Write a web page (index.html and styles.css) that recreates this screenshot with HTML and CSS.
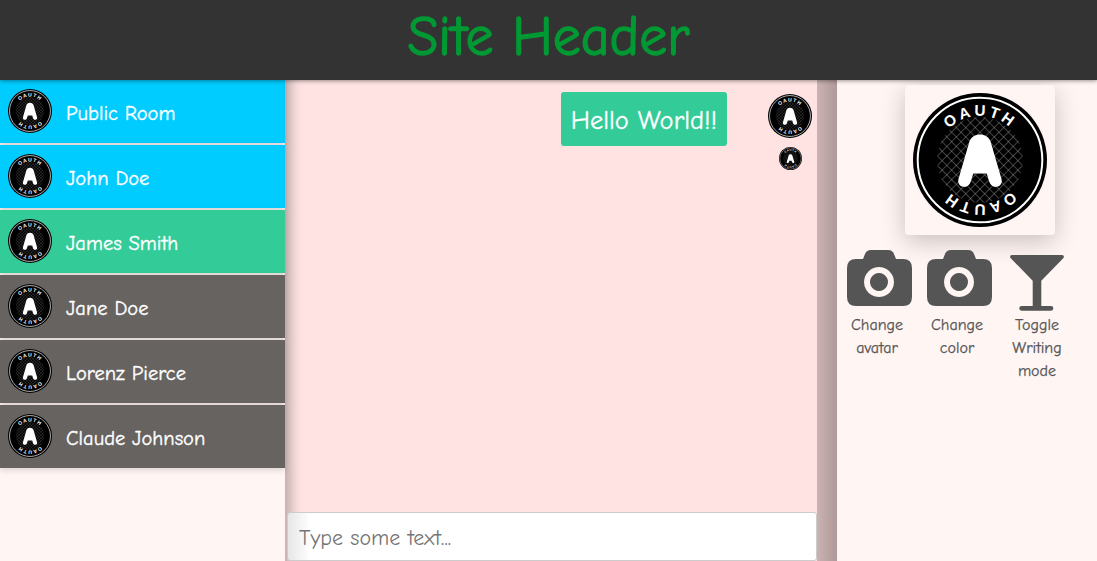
FILE: index.html
```html
<!DOCTYPE html>
<html lang="en">
<head>
<meta charset="utf-8">
<title>Site Header</title>
<link rel="stylesheet" href="styles.css">
</head>
<body>
<svg class="defs" width="0" height="0" aria-hidden="true">
  <defs>
    <pattern id="mesh" width="10" height="10" patternUnits="userSpaceOnUse" patternTransform="rotate(45 100 100)">
      <path d="M0 0H10M0 0V10" stroke="#fff" stroke-width="1.200" fill="none"/>
    </pattern>
    <path id="arcTop" d="M34 100a66 66 0 0 1 132 0"/>
    <path id="arcBottom" d="M166 100a66 66 0 0 1-132 0"/>
    <symbol id="oauth" viewBox="0 0 200 200">
      <circle cx="100" cy="100" r="100" fill="#000"/>
      <circle cx="100" cy="100" r="93" fill="none" stroke="#fff" stroke-width="3"/>
      <circle cx="100" cy="100" r="64" fill="url(#mesh)" opacity=".65"/>
      <path d="M100 62c-7 0-13 3-16 11L68 128c-2 7 2 11 7 12 5 1 9-2 11-7l4-13h20l4 13c2 5 6 8 11 7 5-1 9-5 7-12L116 73c-3-8-9-11-16-11z" fill="#fff"/>
      <text class="logo-text"><textPath href="#arcTop" startOffset="50%" text-anchor="middle">OAUTH</textPath></text>
      <text class="logo-text"><textPath href="#arcBottom" startOffset="50%" text-anchor="middle">OAUTH</textPath></text>
    </symbol>
    <symbol id="camera" viewBox="0 0 65 56">
      <path fill-rule="evenodd" d="M9 9H16L18 4Q19.500 0 24 0H41Q45.500 0 47 4L49 9H56Q65 9 65 18V47Q65 56 56 56H9Q0 56 0 47V18Q0 9 9 9ZM32 17a15 15 0 1 0 .01 0ZM32 23a9 9 0 1 1-.01 0Z"/>
    </symbol>
    <symbol id="glass" viewBox="0 0 54 56">
      <path d="M2 0H52c2 0 2.500 2 1 3.500L31.300 25.700V51h9.700a2.300 2.300 0 0 1 0 4.700H11.600a2.300 2.300 0 0 1 0-4.700h11.100V25.700L1 3.500C-.5 2 0 0 2 0z"/>
    </symbol>
  </defs>
</svg>
<div class="app">
  <header class="site-header"><h1 class="site-title">Site Header</h1></header>
  <div class="main">
    <nav class="rooms">
      <a class="room room-blue"><svg class="avatar"><use href="#oauth"/></svg><span class="room-name">Public Room</span></a>
      <a class="room room-blue"><svg class="avatar"><use href="#oauth"/></svg><span class="room-name">John Doe</span></a>
      <a class="room room-green"><svg class="avatar"><use href="#oauth"/></svg><span class="room-name">James Smith</span></a>
      <a class="room room-grey"><svg class="avatar"><use href="#oauth"/></svg><span class="room-name">Jane Doe</span></a>
      <a class="room room-grey"><svg class="avatar"><use href="#oauth"/></svg><span class="room-name">Lorenz Pierce</span></a>
      <a class="room room-grey"><svg class="avatar"><use href="#oauth"/></svg><span class="room-name">Claude Johnson</span></a>
    </nav>
    <section class="chat">
      <div class="messages">
        <div class="message">
          <p class="bubble">Hello World!!</p>
          <div class="authors">
            <svg class="avatar"><use href="#oauth"/></svg>
            <svg class="avatar-small"><use href="#oauth"/></svg>
          </div>
        </div>
      </div>
      <input class="composer" type="text" placeholder="Type some text...">
    </section>
    <div class="divider"></div>
    <aside class="profile">
      <div class="profile-card"><svg class="profile-logo"><use href="#oauth"/></svg></div>
      <div class="tools">
        <div class="tool"><svg class="tool-icon"><use href="#camera"/></svg><span>Change avatar</span></div>
        <div class="tool"><svg class="tool-icon"><use href="#camera"/></svg><span>Change color</span></div>
        <div class="tool"><svg class="tool-icon tool-icon-glass"><use href="#glass"/></svg><span>Toggle Writing mode</span></div>
      </div>
    </aside>
  </div>
</div>
</body>
</html>
```
FILE: styles.css
```css
* { box-sizing: border-box; }
html, body { height: 100%; }
body {
  margin: 0;
  overflow: hidden;
  font-family: "Comic Sans MS", "Comic Neue", cursive, "DejaVu Sans", sans-serif;
  background: #fff5f3;
}
.defs { position: absolute; }
.logo-text {
  font-family: "Liberation Sans", sans-serif;
  font-weight: 700;
  font-size: 23px;
  letter-spacing: 4.5px;
  fill: #fff;
}
.app { display: flex; flex-direction: column; height: 100%; }
.site-header {
  position: relative;
  z-index: 3;
  flex: 0 0 80px;
  background: #333;
  box-shadow: 0 1px 4px rgba(0, 0, 0, .4);
  display: flex;
  justify-content: center;
}
.site-title {
  margin: 0;
  font-size: 56px;
  font-weight: 400;
  line-height: 74px;
  color: #009933;
  -webkit-text-stroke: 1.4px #009933;
}
.main { flex: 1; display: flex; min-height: 0; }
.rooms {
  position: relative;
  z-index: 2;
  flex: 0 0 285px;
  display: flex;
  flex-direction: column;
  gap: 2px;
}
.room {
  height: 63px;
  flex: none;
  display: flex;
  align-items: center;
  padding-left: 8px;
  color: #fff;
  box-shadow: 0 2px 6px rgba(0, 0, 0, .15);
}
.room-blue { background: #00ccff; }
.room-green { background: #33cc99; }
.room-grey { background: #666361; }
.room-name {
  margin: 6px 0 0 14px;
  font-size: 20.5px;
  line-height: 1;
  -webkit-text-stroke: .35px #fff;
}
.avatar { width: 44px; height: 44px; flex: none; display: block; margin-top: -2px; }
.avatar-small { width: 23px; height: 23px; display: block; margin-left: 1px; }
.chat {
  flex: 0 0 532px;
  display: flex;
  flex-direction: column;
  background: #ffe3e3;
  box-shadow: inset 14px 0 12px -8px rgba(0, 0, 0, .25);
}
.messages { flex: 1; padding: 12px 5px 0 0; min-height: 0; }
.message { display: flex; justify-content: flex-end; align-items: flex-start; }
.bubble {
  margin: 0 41px 0 0;
  height: 54px;
  padding: 2px 10px 0;
  display: flex;
  align-items: center;
  font-size: 26.5px;
  color: #fff;
  background: #33cc99;
  border-radius: 3px;
  -webkit-text-stroke: .3px #fff;
}
.authors { display: flex; flex-direction: column; align-items: center; gap: 9px; padding-top: 2px; }
.authors .avatar { margin: 0; }
.composer {
  flex: 0 0 49px;
  margin-left: 2px;
  padding: 2px 11px 0;
  font: inherit;
  font-size: 22px;
  color: #333;
  background: linear-gradient(90deg, #e6e6e6, #fff 22px);
  border: 1px solid #ccc;
  border-radius: 3px;
}
.composer::placeholder { color: #757575; opacity: 1; }
.divider { flex: 0 0 20px; background: linear-gradient(90deg, #cbb3b3, #ae9898); }
.profile { flex: 1; min-width: 0; display: flex; flex-direction: column; background: #fff5f3; }
.profile-card {
  margin: 5px 0 0 68px;
  width: 150px;
  height: 150px;
  display: flex;
  align-items: center;
  justify-content: center;
  background: #fff5f3;
  border-radius: 4px;
  box-shadow: 0 6px 24px rgba(0, 0, 0, .22);
}
.profile-logo { width: 134px; height: 134px; display: block; }
.tools { display: flex; margin-top: 15px; }
.tool {
  width: 80px;
  display: flex;
  flex-direction: column;
  align-items: center;
  text-align: center;
  padding: 0 5px;
  font-size: 16px;
  line-height: 23px;
  color: #555;
  -webkit-text-stroke: .25px #555;
}
.tool-icon { width: 65px; height: 56px; fill: #555; display: block; margin: 0 0 8px 5px; flex: none; }
.tool-icon-glass { width: 54px; margin: 5px 0 3px 0; }
```
